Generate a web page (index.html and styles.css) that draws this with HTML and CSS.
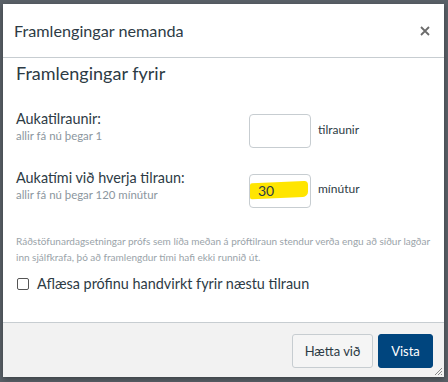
FILE: index.html
```html
<!DOCTYPE html>
<html lang="is">
<head>
  <meta charset="UTF-8">
  <title>Framlengingar nemanda</title>
  <link rel="stylesheet" href="styles.css">
</head>
<body>

  <div class="dialog">
    <div class="dialog-header">
      <span class="dialog-title">Framlengingar nemanda</span>
      <svg class="close" width="10" height="10" viewBox="0 0 10 10">
        <path d="M1 1 L9 9 M9 1 L1 9" stroke="#6b6b6b" stroke-width="1.8" fill="none"/>
      </svg>
    </div>

    <div class="dialog-body">
      <h2>Framlengingar fyrir</h2>

      <div class="row row-first">
        <div class="label">
          <div class="label-main">Aukatilraunir:</div>
          <div class="label-sub">allir fá nú þegar 1</div>
        </div>
        <div class="field"></div>
        <div class="unit">tilraunir</div>
      </div>

      <div class="row row-second">
        <div class="label">
          <div class="label-main">Aukatími við hverja tilraun:</div>
          <div class="label-sub">allir fá nú þegar 120 mínútur</div>
        </div>
        <div class="field">
          <span class="highlight"></span>
          <span class="value">30</span>
        </div>
        <div class="unit">mínútur</div>
      </div>

      <p class="note">Ráðstöfunardagsetningar prófs sem líða meðan á próftilraun stendur verða engu að síður lagðar inn sjálfkrafa, þó að framlengdur tími hafi ekki runnið út.</p>

      <label class="check">
        <span class="box"></span>
        Aflæsa prófinu handvirkt fyrir næstu tilraun
      </label>
    </div>

    <div class="dialog-footer">
      <button class="btn btn-cancel">Hætta við</button>
      <button class="btn btn-primary">Vista</button>
      <svg class="grip" width="10" height="10" viewBox="0 0 10 10">
        <path d="M9 2 L2 9 M9 5 L5 9 M9 8 L8 9" stroke="#8a8a8a" stroke-width="1" fill="none"/>
      </svg>
    </div>
  </div>

</body>
</html>
```

FILE: styles.css
```css
body {
  font-family: Lato, 'Liberation Sans', sans-serif;
  background: #5a6168;
  color: #2d3b45;
  margin: 0;
  padding: 4px 4px 5px 3px;
}

.dialog {
  width: 441px;
  height: 373px;
  background: #fff;
  display: flex;
  flex-direction: column;
  box-shadow: 0 2px 6px rgba(0, 0, 0, 0.35);
}

.dialog-header {
  height: 53px;
  border-bottom: 1px solid #c7cdd1;
  display: flex;
  align-items: center;
  justify-content: space-between;
  padding: 0 14px 0 11px;
}

.dialog-title {
  font-size: 16.2px;
}

.close {
  margin-top: 1px;
}

.dialog-body {
  padding: 0 13px;
  flex: 1;
}

h2 {
  font-size: 18px;
  font-weight: normal;
  line-height: 24px;
  margin: 3px 0 0;
}

.row {
  display: flex;
  align-items: flex-start;
}

.row-first {
  margin-top: 25px;
}

.row-second {
  margin-top: 21px;
}

.label {
  width: 233px;
}

.label-main {
  font-size: 14.4px;
  line-height: 18px;
}

.label-sub {
  font-size: 11.4px;
  line-height: 16px;
  color: #8b969e;
}

.field {
  position: relative;
  width: 60px;
  height: 32px;
  border: 1px solid #c7cdd1;
  border-radius: 4px;
  margin-top: 4px;
}

.row-second .field {
  margin-top: 5px;
}

.highlight {
  position: absolute;
  left: 0;
  top: 7px;
  width: 58px;
  height: 16px;
  background: #ffe500;
  border-radius: 2px 4px 5px 2px;
  transform: skewY(-2.5deg);
}

.value {
  position: relative;
  display: block;
  padding: 7px 0 0 8px;
  font-size: 14px;
  line-height: 18px;
}

.unit {
  align-self: center;
  margin-left: 7px;
  font-size: 12px;
}

.note {
  font-size: 10px;
  line-height: 16px;
  color: #9aa3a9;
  margin: 25px 0 0;
}

.check {
  display: flex;
  align-items: center;
  gap: 8px;
  font-size: 14.4px;
  line-height: 20px;
  margin-top: 9px;
}

.box {
  width: 10px;
  height: 10px;
  border: 1px solid #555;
  border-radius: 2px;
  margin-left: 1px;
}

.dialog-footer {
  position: relative;
  height: 55px;
  border-top: 1px solid #c7cdd1;
  background: #f2f2f2;
  display: flex;
  justify-content: flex-end;
  align-items: flex-start;
  gap: 5px;
  padding: 11px 11px 0;
  box-sizing: border-box;
}

.btn {
  font-family: Lato, 'Liberation Sans', sans-serif;
  font-size: 13px;
  height: 34px;
  padding: 0;
  border: 1px solid #c7cdd1;
  border-radius: 3px;
  background: #f5f5f5;
  color: #2d3b45;
}

.btn-cancel {
  width: 81px;
}

.btn-primary {
  width: 55px;
  background: #00457e;
  border-color: #00457e;
  color: #fff;
}

.grip {
  position: absolute;
  right: 1px;
  bottom: 1px;
}
```
